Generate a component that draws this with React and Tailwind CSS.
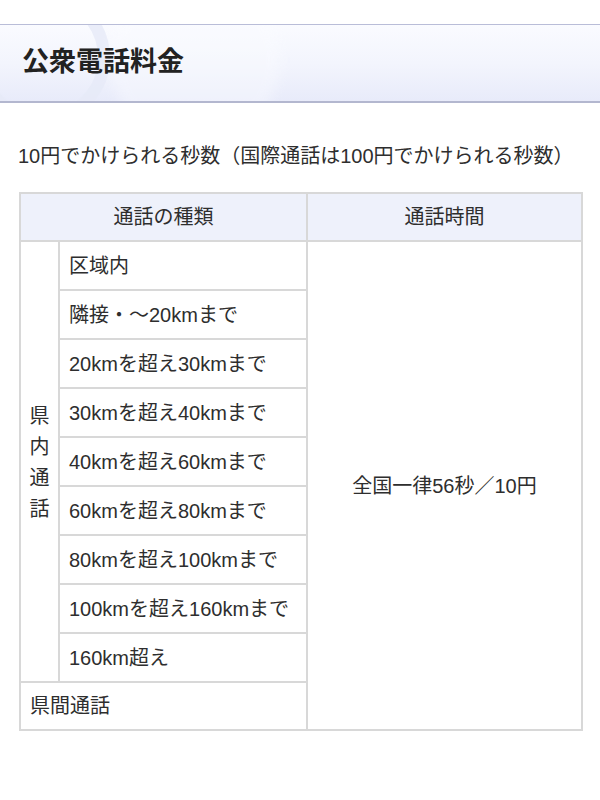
import React from "react";

const font = { fontFamily: '"Liberation Sans", "Noto Sans CJK JP", sans-serif' };

const subRows = [
  "区域内",
  "隣接・〜20kmまで",
  "20kmを超え30kmまで",
  "30kmを超え40kmまで",
  "40kmを超え60kmまで",
  "60kmを超え80kmまで",
  "80kmを超え100kmまで",
  "100kmを超え160kmまで",
  "160km超え",
];

export default function App() {
  return (
    <div className="w-[600px] h-[800px] bg-white text-[#2e2e2e] overflow-hidden" style={font}>
      <div className="h-6" />
      <div className="relative h-[79px] border-t border-b-2 border-t-[#b9bdd8] border-b-[#b3b7cf] bg-gradient-to-b from-[#fafbff] via-[#f3f5fd] to-[#e8ebfa] overflow-hidden">
        <div className="absolute -left-[25px] -top-[35px] w-[135px] h-[135px] rounded-full border-[12px] border-[#e6eaf8] opacity-80" />
        <div className="absolute left-[110px] -top-[50px] w-[170px] h-[170px] rounded-full bg-[#fbfcff] opacity-40 blur-[6px]" />
        <h1 className="relative pl-[22px] pt-[20px] text-[27px] leading-[34px] font-bold text-[#222]">公衆電話料金</h1>
      </div>
      <p className="pl-[18px] mt-[40px] text-[20px] leading-[26px]">10円でかけられる秒数（国際通話は100円でかけられる秒数）</p>
      <table className="ml-[19px] mt-[23px] w-[562px] border-collapse text-[20px] table-fixed">
        <colgroup>
          <col className="w-[39px]" />
          <col className="w-[248px]" />
          <col className="w-[275px]" />
        </colgroup>
        <thead>
          <tr className="h-[48px] bg-[#eef1fb]">
            <th colSpan={2} className="border-2 border-[#d8d8d8] font-normal text-center">通話の種類</th>
            <th className="border-2 border-[#d8d8d8] font-normal text-center">通話時間</th>
          </tr>
        </thead>
        <tbody>
          {subRows.map((t, i) => (
            <tr key={t} className="h-[49px]">
              {i === 0 && (
                <td rowSpan={9} className="border-2 border-[#d8d8d8] text-center align-middle">
                  <div className="flex flex-col items-center leading-[31px] pt-[2px]">
                    <span>県</span>
                    <span>内</span>
                    <span>通</span>
                    <span>話</span>
                  </div>
                </td>
              )}
              <td className="border-2 border-[#d8d8d8] pl-[9px]">{t}</td>
              {i === 0 && (
                <td rowSpan={10} className="border-2 border-[#d8d8d8] text-center align-middle">
                  全国一律56秒／10円
                </td>
              )}
            </tr>
          ))}
          <tr className="h-[48px]">
            <td colSpan={2} className="border-2 border-[#d8d8d8] pl-[9px]">県間通話</td>
          </tr>
        </tbody>
      </table>
    </div>
  );
}
